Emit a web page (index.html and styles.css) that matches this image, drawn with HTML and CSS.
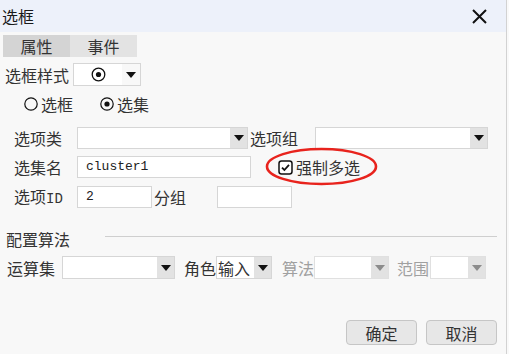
FILE: index.html
```html
<!DOCTYPE html>
<html lang="zh">
<head>
<meta charset="utf-8">
<title>选框</title>
<link rel="stylesheet" href="styles.css">
</head>
<body>
<div class="dialog">
  <div class="titlebar">
    <span class="title">选框</span>
    <svg class="close" width="15" height="15" viewBox="0 0 15 15"><path d="M1 1 L14 14 M14 1 L1 14" stroke="#111" stroke-width="2" fill="none"/></svg>
  </div>
  <div class="tabs">
    <div class="tab active">属性</div>
    <div class="tab">事件</div>
  </div>

  <div class="row r-style">
    <span class="lbl w68">选框样式</span>
    <div class="select w68 plain">
      <div class="field center">
        <svg width="15" height="15" viewBox="0 0 15 15"><circle cx="7.5" cy="7.5" r="6.3" fill="none" stroke="#111" stroke-width="1.3"/><circle cx="7.5" cy="7.5" r="2.6" fill="#111"/></svg>
      </div>
      <div class="arrow"><i class="tri"></i></div>
    </div>
  </div>

  <div class="row r-radio">
    <span class="radio"><svg width="14" height="14" viewBox="0 0 14 14"><circle cx="7" cy="7" r="6.2" fill="none" stroke="#111" stroke-width="1.2"/></svg>选框</span>
    <span class="radio second"><svg width="14" height="14" viewBox="0 0 14 14"><circle cx="7" cy="7" r="6.2" fill="none" stroke="#111" stroke-width="1.2"/><circle cx="7" cy="7" r="2.6" fill="#111"/></svg>选集</span>
  </div>

  <div class="row r-form r1">
    <span class="lbl w63">选项类</span>
    <div class="select w171"><div class="field"></div><div class="arrow"><i class="tri"></i></div></div>
    <span class="lbl w65 ml2">选项组</span>
    <div class="select w173"><div class="field"></div><div class="arrow"><i class="tri"></i></div></div>
  </div>

  <div class="row r-form r2">
    <span class="lbl w63">选集名</span>
    <div class="input w174">cluster1</div>
    <span class="check">
      <svg width="15" height="15" viewBox="0 0 15 15"><rect x="1" y="1" width="13" height="13" rx="2.5" fill="#fff" stroke="#111" stroke-width="1.5"/><path d="M4 7.6 L6.4 10 L11 4.8" fill="none" stroke="#111" stroke-width="1.8"/></svg>
      强制多选
    </span>
  </div>

  <div class="row r-form r3">
    <span class="lbl w63">选项<span class="mono">ID</span></span>
    <div class="input w75">2</div>
    <span class="lbl w63 ml2">分组</span>
    <div class="input w75"></div>
  </div>

  <div class="section">
    <span class="sec-title">配置算法</span>
    <div class="sec-line"></div>
  </div>

  <div class="row r-algo">
    <span class="lbl w55">运算集</span>
    <div class="select w113"><div class="field"></div><div class="arrow"><i class="tri"></i></div></div>
    <span class="lbl w32 ml9">角色</span>
    <div class="select w56"><div class="field val">输入</div><div class="arrow"><i class="tri"></i></div></div>
    <span class="lbl w32 ml10 dis">算法</span>
    <div class="select w75 disabled"><div class="field"></div><div class="arrow"><i class="tri"></i></div></div>
    <span class="lbl w33 ml8 dis">范围</span>
    <div class="select w56 disabled"><div class="field"></div><div class="arrow"><i class="tri"></i></div></div>
  </div>

  <div class="buttons">
    <button class="btn">确定</button>
    <button class="btn">取消</button>
  </div>

  <svg class="highlight" width="113" height="39" viewBox="0 0 113 39"><ellipse cx="56.5" cy="19.5" rx="54.5" ry="17.5" fill="none" stroke="#e8231d" stroke-width="2.6"/></svg>
</div>
</body>
</html>
```

FILE: styles.css
```css
* { box-sizing: border-box; }
html, body { margin: 0; padding: 0; background: #f9f9f9; }
body {
  font-family: "Noto Sans CJK SC", "Noto Sans", sans-serif;
  font-size: 16px;
  color: #333;
}
.dialog {
  position: relative;
  width: 507px;
  height: 354px;
  background: #f8f8f8;
  border-right: 1px solid #d2d2d2;
  display: flex;
  flex-direction: column;
}
.titlebar {
  height: 32px;
  background: #edf1fa;
  display: flex;
  align-items: center;
  justify-content: space-between;
  padding: 0 19px 0 2px;
  line-height: 32px;
}
.title { font-size: 16px; color: #1a1a1a; }
.close { display: block; }

.tabs { display: flex; margin: 3px 0 0 3px; height: 22px; }
.tab {
  width: 67px;
  height: 22px;
  line-height: 22px;
  text-align: center;
  background: #e3e3e3;
  color: #333;
}
.tab.active { background: #d4d4d4; }

.row { display: flex; align-items: center; height: 22px; line-height: 22px; }
.r-style { margin-top: 6px; height: 23px; padding-left: 5px; }
.r-radio { margin-top: 8px; height: 20px; padding-left: 24px; }
.r-form { padding-left: 14px; }
.r1 { margin-top: 13px; }
.r2 { margin-top: 7px; }
.r3 { margin-top: 8px; }
.r-algo { margin-top: 6px; height: 23px; padding-left: 7px; }

.lbl { display: inline-block; white-space: nowrap; }
.dis { color: #a0a0a0; }
.mono { font-family: "Liberation Mono", "DejaVu Sans Mono", monospace; font-size: 14px; }
.w32 { width: 32px; } .w33 { width: 33px; } .w55 { width: 55px; }
.w56 { width: 56px; } .w63 { width: 63px; } .w65 { width: 65px; }
.w68 { width: 68px; } .w75 { width: 75px; } .w113 { width: 113px; }
.w171 { width: 171px; } .w173 { width: 173px; } .w174 { width: 174px; }
.ml2 { margin-left: 2px; } .ml8 { margin-left: 8px; } .ml9 { margin-left: 9px; } .ml10 { margin-left: 10px; }

.select {
  display: flex;
  height: 100%;
  border: 1px solid #d6d6d6;
  background: #fff;
}
.select .field { flex: 1; background: #fff; display: flex; align-items: center; }
.select .field.center { justify-content: center; }
.select .field.val { padding-left: 1px; }
.select .arrow {
  width: 17px;
  background: #e2e2e2;
  display: flex;
  align-items: center;
  justify-content: center;
}
.select.plain .arrow { width: 18px; background: #f8f8f8; }
.tri {
  width: 0; height: 0;
  border-left: 5.5px solid transparent;
  border-right: 5.5px solid transparent;
  border-top: 6px solid #111;
}
.select.disabled { border-color: #e0e0e0; }
.select.disabled .tri { border-top-color: #8c8c8c; }

.radio { display: inline-flex; align-items: center; gap: 3px; }
.radio svg { display: block; }
.radio.second { margin-left: 27px; }

.input {
  height: 100%;
  background: #fff;
  border: 1px solid #d6d6d6;
  padding-left: 8px;
  font-family: "Liberation Mono", "DejaVu Sans Mono", monospace;
  font-size: 13px;
  color: #222;
  line-height: 20px;
}
.check { display: inline-flex; align-items: center; gap: 3px; margin-left: 27px; }
.check svg { display: block; }

.section { display: flex; align-items: center; margin-top: 20px; padding-left: 6px; height: 22px; }
.sec-title { width: 99px; }
.sec-line { width: 392px; height: 1px; background: #cfcfcf; margin-top: -5px; }

.buttons { display: flex; justify-content: flex-end; gap: 9px; margin-top: 41px; padding-right: 9px; }
.btn {
  width: 71px;
  height: 25px;
  background: #e7e7e7;
  border: 1px solid #c6c6c6;
  border-radius: 4px;
  font-family: "Noto Sans CJK SC", sans-serif;
  font-size: 16px;
  color: #333;
  padding: 0;
  line-height: 22px;
}

.highlight { position: absolute; left: 265px; top: 147px; }
```
